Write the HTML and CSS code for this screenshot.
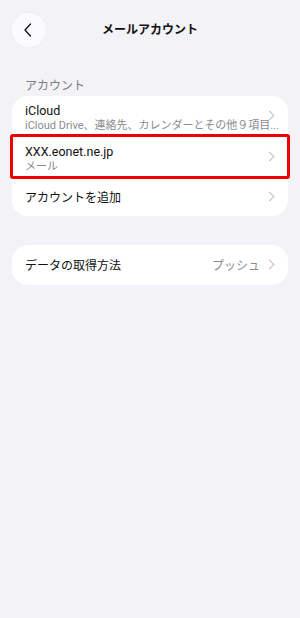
FILE: index.html
```html
<!DOCTYPE html>
<html lang="ja">
<head>
<meta charset="utf-8">
<title>メールアカウント</title>
<link rel="stylesheet" href="styles.css">
</head>
<body>
<header class="nav">
  <button class="back" aria-label="戻る">
    <svg width="10" height="14" viewBox="0 0 10 14"><path d="M7.5 1 L2 7 L7.5 13" fill="none" stroke="#111" stroke-width="1.3" stroke-linecap="round" stroke-linejoin="round"/></svg>
  </button>
  <h1 class="title">メールアカウント</h1>
  <span></span>
</header>

<div class="section-label">アカウント</div>
<div class="card">
  <div class="row r1">
    <div class="row-text">
      <div class="row-title latin">iCloud</div>
      <div class="row-sub">iCloud Drive、連絡先、カレンダーとその他９項目...</div>
    </div>
    <span class="chev"></span>
  </div>
  <div class="row r2 marked">
    <div class="row-text">
      <div class="row-title latin">XXX.eonet.ne.jp</div>
      <div class="row-sub">メール</div>
    </div>
    <span class="chev"></span>
  </div>
  <div class="row r3">
    <div class="row-text">
      <div class="row-title">アカウントを追加</div>
    </div>
    <span class="chev"></span>
  </div>
</div>

<div class="card card2">
  <div class="row r4">
    <div class="row-text">
      <div class="row-title">データの取得方法</div>
    </div>
    <span class="value">プッシュ</span>
    <span class="chev"></span>
  </div>
</div>
</body>
</html>
```

FILE: styles.css
```css
* { box-sizing: border-box; }
html, body {
  margin: 0;
  padding: 0;
  background: #f2f2f7;
  font-family: Roboto, "Noto Sans CJK JP", sans-serif;
  color: #111;
}
body { width: 300px; height: 618px; overflow: hidden; }

.nav {
  display: grid;
  grid-template-columns: 34px 1fr 34px;
  align-items: center;
  padding: 13px 12px 0;
  height: 47px;
}
.back {
  width: 34px;
  height: 34px;
  border-radius: 50%;
  border: none;
  background: #fbfbfe;
  display: flex;
  align-items: center;
  justify-content: center;
  padding: 0 2px 0 0;
  box-shadow: 0 0 3px rgba(0,0,0,0.03);
}
.back svg { display: block; }
.title {
  margin: 0;
  text-align: center;
  font-size: 12px;
  font-weight: 700;
  line-height: 16px;
  color: #111;
}

.section-label {
  margin: 31px 0 2px;
  padding-left: 25px;
  font-size: 12px;
  line-height: 16px;
  color: #7d7d82;
}

.card {
  margin: 0 12px;
  background: #fff;
  border-radius: 16px;
}
.card2 { margin-top: 29px; }

.row {
  position: relative;
  display: flex;
  align-items: center;
  padding: 2px 28px 0 13px;
}
.r1 { height: 40px; padding-right: 10px; padding-top: 3px; }
.r2 { height: 42px; padding-top: 3px; }
.r3 { height: 38px; }
.r4 { height: 40px; }

.row-text { flex: 1; min-width: 0; }
.row-title {
  font-size: 12px;
  line-height: 16px;
  color: #111;
  white-space: nowrap;
}
.row-title.latin { font-size: 12.5px; }
.row-sub {
  font-size: 11px;
  line-height: 14px;
  color: #8a8a8e;
  white-space: nowrap;
}
.value {
  font-size: 12px;
  line-height: 16px;
  color: #8a8a8e;
}

.chev {
  position: absolute;
  right: 15px;
  top: 50%;
  width: 7px;
  height: 7px;
  margin-top: -3px;
  border-top: 1.3px solid #bdbdc2;
  border-right: 1.3px solid #bdbdc2;
  transform: translateY(-1px) rotate(45deg);
}

.marked::after {
  content: "";
  position: absolute;
  left: -2px;
  right: -2px;
  top: -2px;
  bottom: -1px;
  border: 3px solid #ee0000;
  border-radius: 3px;
  pointer-events: none;
}
```
